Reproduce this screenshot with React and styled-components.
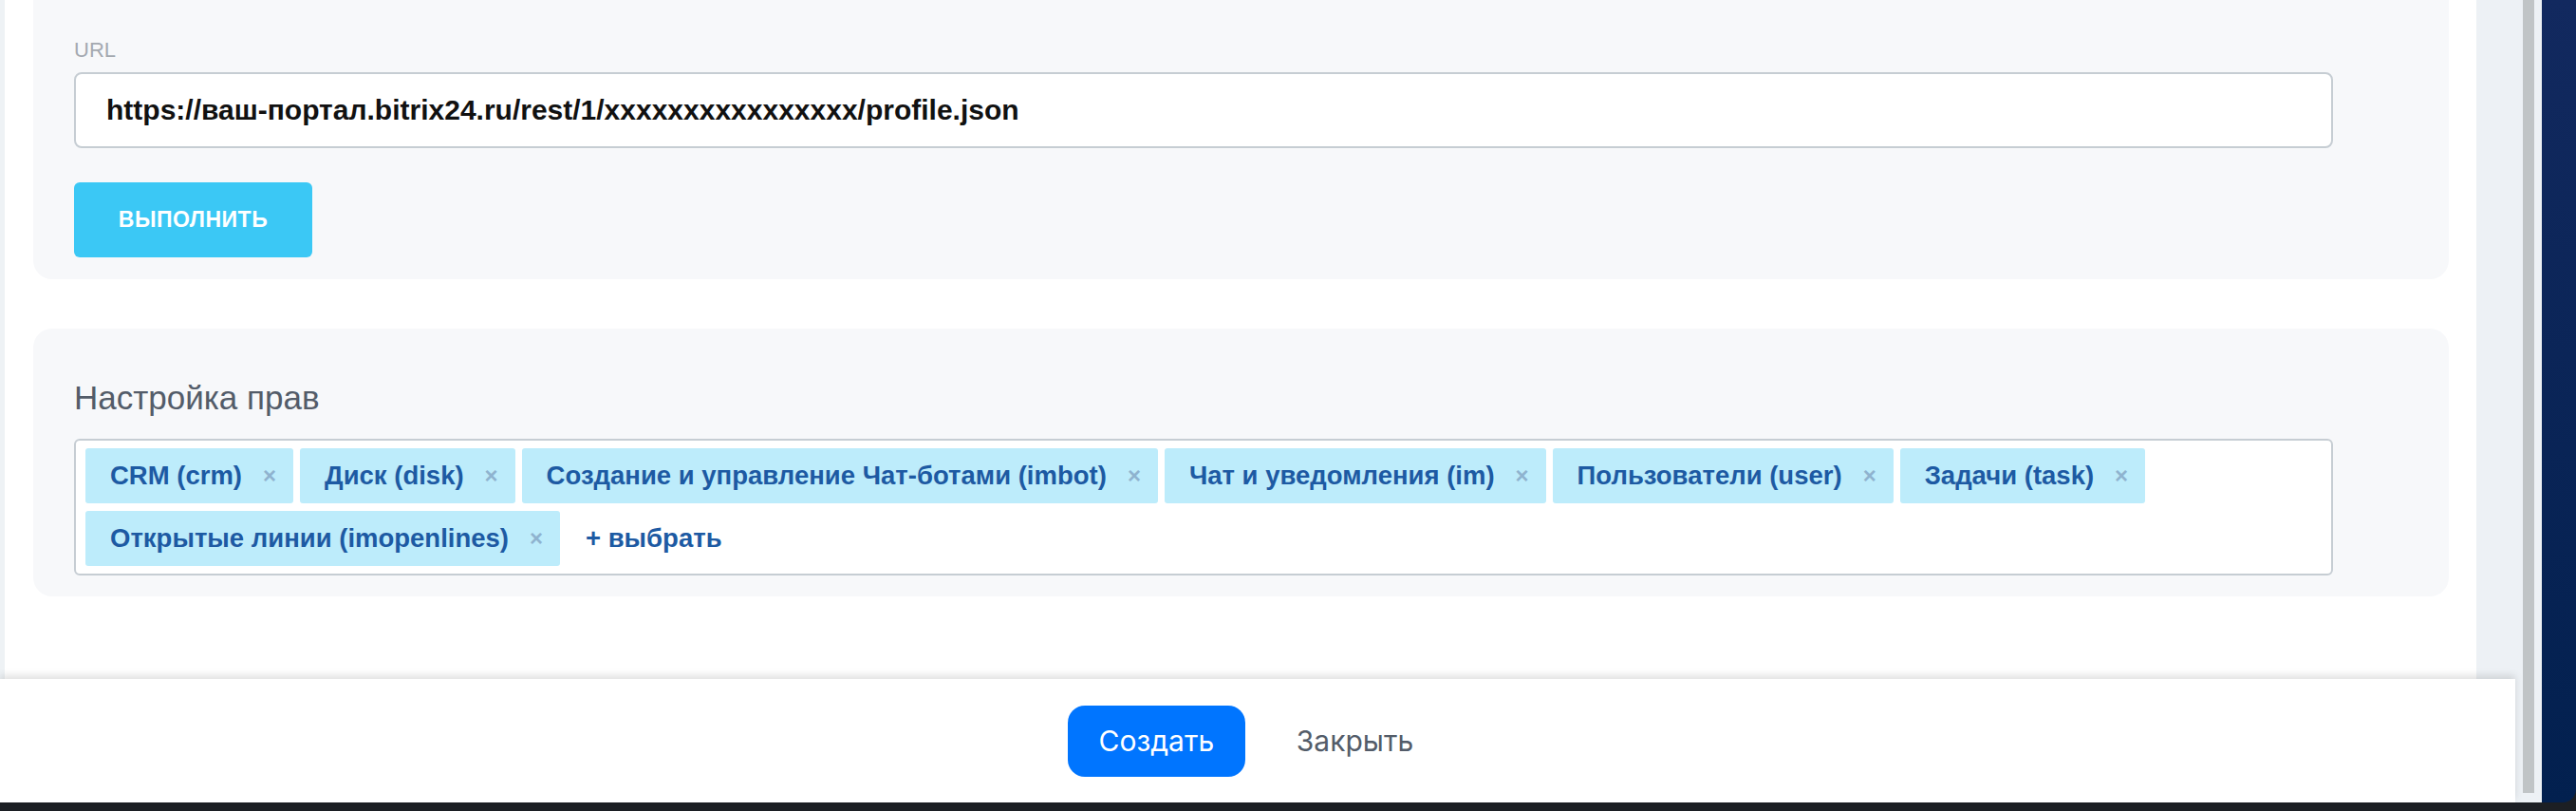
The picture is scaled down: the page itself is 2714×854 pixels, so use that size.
import React from "react";
import styled, { createGlobalStyle } from "styled-components";

const Global = createGlobalStyle`
  html, body { margin: 0; padding: 0; width: 2714px; height: 854px; overflow: hidden; background: #1c1f24; }
  * { box-sizing: border-box; }
`;

const Screen = styled.div`
  display: flex; flex-direction: column; width: 2714px; height: 854px;
`;
const Upper = styled.div`display: flex; height: 845px;`;
const Shade = styled.div`height: 9px; background: #1c1f24;`;
const LeftPane = styled.div`display: flex; flex-direction: column; width: 2658px; background: #edf1f5;`;
const ScrollRow = styled.div`display: flex; height: 715px;`;
const Content = styled.div`
  width: 2609px; background: #fff; border-left: 5px solid #eef2f5;
  padding: 0 29px 0 30px; display: flex; flex-direction: column; gap: 52px;
  font-family: "Liberation Sans", Arial, sans-serif;
`;
const Gutter = styled.div`flex: 1; background: #edf1f5;`;
const Card = styled.div`
  background: #f7f8fa; border-radius: ${p => (p.$top ? "0 0 20px 20px" : "20px")};
  padding: ${p => p.$pad};
`;
const Label = styled.div`color: #a4a9b0; font-size: 22px; height: 26px; margin-bottom: 10px;`;
const Input = styled.div`
  width: 2380px; height: 80px; background: #fff; border: 2px solid #c6cdd3; border-radius: 8px;
  display: flex; align-items: center; padding-left: 32px; font-weight: bold; font-size: 30px; color: #111;
`;
const RunBtn = styled.div`
  margin-top: 36px; width: 251px; height: 79px; background: #3bc8f5; border-radius: 6px;
  display: flex; align-items: center; justify-content: center; color: #fff;
  font-weight: bold; font-size: 23px; letter-spacing: 0.5px;
`;
const Title = styled.div`font-size: 35px; color: #535c69; margin-bottom: 24px; line-height: 38px;`;
const TagBox = styled.div`
  width: 2380px; min-height: 144px; background: #fff; border: 2px solid #c6cdd3; border-radius: 6px;
  padding: 8px 10px; display: flex; flex-wrap: wrap; gap: 8px 7px; align-content: flex-start;
`;
const Tag = styled.div`
  height: 58px; background: #bdecfb; border-radius: 3px; display: flex; align-items: center;
  padding: 0 18px 0 26px; color: #1d5aa3; font-weight: bold; font-size: 27.5px; gap: 22px;
`;
const X = styled.span`color: #8fb3cf; font-size: 24px; font-weight: bold;`;
const Add = styled.div`
  height: 58px; display: flex; align-items: center; padding-left: 20px;
  color: #1d5aa3; font-weight: bold; font-size: 27.5px;
`;
const Footer = styled.div`
  width: 2650px; height: 130px; background: #fff; box-shadow: 0 -4px 8px rgba(0,0,0,0.12);
  display: flex; align-items: center; justify-content: center; gap: 54px; padding-right: 36px;
  font-family: Inter, "Open Sans", sans-serif; font-size: 30px; position: relative;
`;
const Primary = styled.div`
  width: 187px; height: 75px; border-radius: 18px; background: #0075ff; color: #fff;
  display: flex; align-items: center; justify-content: center;
`;
const Ghost = styled.div`color: #535c69;`;
const Scrollbar = styled.div`width: 20px; background: #edf1f5; display: flex; padding: 0 8px 10px 0;`;
const Thumb = styled.div`width: 12px; background: #c0c4c6;`;
const Desktop = styled.div`flex: 1; background: linear-gradient(180deg, #12295f, #02204f); border-bottom-right-radius: 14px;`;

const tags = [
  "CRM (crm)", "Диск (disk)", "Создание и управление Чат-ботами (imbot)",
  "Чат и уведомления (im)", "Пользователи (user)", "Задачи (task)", "Открытые линии (imopenlines)",
];

export default function App() {
  return (
    <Screen>
      <Global />
      <Upper>
        <LeftPane>
          <ScrollRow>
            <Content>
              <Card $top $pad="40px 43px 23px">
                <Label>URL</Label>
                <Input>https://ваш-портал.bitrix24.ru/rest/1/xxxxxxxxxxxxxxxx/profile.json</Input>
                <RunBtn>ВЫПОЛНИТЬ</RunBtn>
              </Card>
              <Card $pad="54px 43px 22px">
                <Title>Настройка прав</Title>
                <TagBox>
                  {tags.map(t => (
                    <Tag key={t}>{t}<X>×</X></Tag>
                  ))}
                  <Add>+ выбрать</Add>
                </TagBox>
              </Card>
            </Content>
            <Gutter />
          </ScrollRow>
          <Footer>
            <Primary>Создать</Primary>
            <Ghost>Закрыть</Ghost>
          </Footer>
        </LeftPane>
        <Scrollbar><Thumb /></Scrollbar>
        <Desktop />
      </Upper>
      <Shade />
    </Screen>
  );
}
